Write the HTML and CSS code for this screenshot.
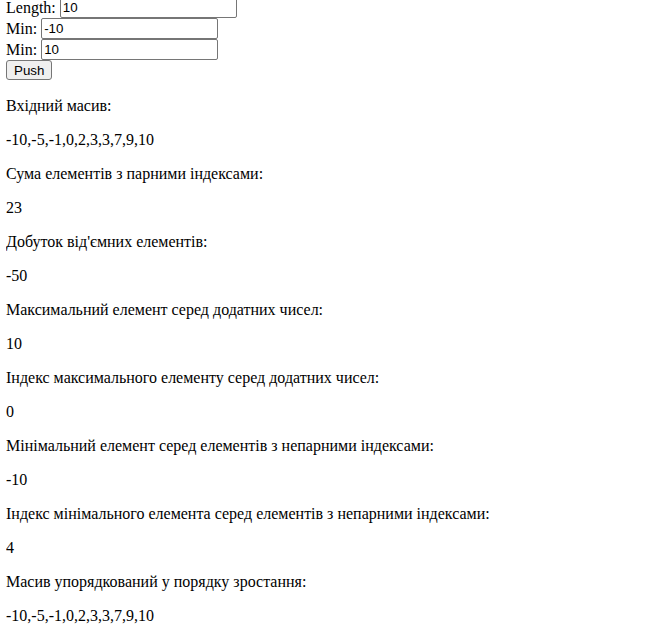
FILE: index.html
```html
<!DOCTYPE html>
<html>
<head>
<meta charset="utf-8">
<link rel="stylesheet" href="styles.css">
</head>
<body class="page">
<div class="form">
<div class="row">Length: <input class="field" type="text" value="10"></div>
<div class="row">Min: <input class="field" type="text" value="-10"></div>
<div class="row">Min: <input class="field" type="text" value="10"></div>
<div class="row"><button class="btn">Push</button></div>
</div>
<p class="out">Вхідний масив:</p>
<p class="out">-10,-5,-1,0,2,3,3,7,9,10</p>
<p class="out">Сума елементів з парними індексами:</p>
<p class="out">23</p>
<p class="out">Добуток від'ємних елементів:</p>
<p class="out">-50</p>
<p class="out">Максимальний елемент серед додатних чисел:</p>
<p class="out">10</p>
<p class="out">Індекс максимального елементу серед додатних чисел:</p>
<p class="out">0</p>
<p class="out">Мінімальний елемент серед елементів з непарними індексами:</p>
<p class="out">-10</p>
<p class="out">Індекс мінімального елемента серед елементів з непарними індексами:</p>
<p class="out">4</p>
<p class="out">Масив упорядкований у порядку зростання:</p>
<p class="out">-10,-5,-1,0,2,3,3,7,9,10</p>
</body>
</html>
```
FILE: styles.css
```css
html, body { background: #fff; }
.page {
  margin: -3px 8px 8px 6px;
  font-family: "Liberation Serif", "Times New Roman", serif;
  font-size: 16px;
  color: #000;
}
.row { line-height: 21px; height: 21px; }
.field {
  box-sizing: border-box;
  width: 177px;
  height: 21px;
  border: 1px solid #767676;
  border-radius: 2px;
  padding: 1px 2px;
  font-family: "Liberation Sans", Arial, sans-serif;
  font-size: 13.33px;
  color: #000;
  vertical-align: bottom;
  margin: 0;
}
.btn {
  box-sizing: border-box;
  height: 20px;
  margin: 0;
  padding: 1px 7px;
  border: 1px solid #767676;
  border-radius: 3px;
  background: #efefef;
  font-family: "Liberation Sans", Arial, sans-serif;
  font-size: 13.33px;
  color: #000;
  vertical-align: top;
}
.out { margin: 16px 0; line-height: 18px; }
```
